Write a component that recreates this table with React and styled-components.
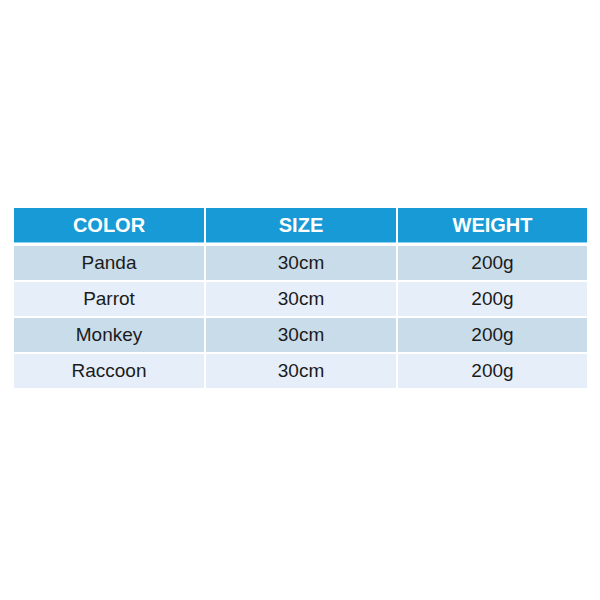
import React from 'react';
import styled, { createGlobalStyle } from 'styled-components';

const GlobalStyle = createGlobalStyle`
  body {
    margin: 0;
    background: #ffffff;
    font-family: "Liberation Sans", Arial, sans-serif;
  }
`;

const Page = styled.div`
  width: 600px;
  height: 600px;
  padding: 208px 0 0 14px;
  box-sizing: border-box;
`;

const Table = styled.div`
  width: 573px;
  display: grid;
  grid-template-columns: 190px 190px 189px;
  column-gap: 2px;
  row-gap: 2px;
`;

const HeadCell = styled.div`
  height: 34px;
  background: #189ad6;
  color: #ffffff;
  font-size: 20px;
  font-weight: bold;
  display: flex;
  align-items: center;
  justify-content: center;
  border-bottom: 1px solid #8fd0f0;
  margin-bottom: 1px;
`;

const Cell = styled.div`
  height: 34px;
  background: ${({ $odd }) => ($odd ? '#c9dcea' : '#e5eef9')};
  color: #1b1b1b;
  font-size: 19px;
  display: flex;
  align-items: center;
  justify-content: center;
`;

const rows = [
  ['Panda', '30cm', '200g'],
  ['Parrot', '30cm', '200g'],
  ['Monkey', '30cm', '200g'],
  ['Raccoon', '30cm', '200g'],
];

const App = () => {
  return (
    <>
      <GlobalStyle />
      <Page>
        <Table>
          <HeadCell>COLOR</HeadCell>
          <HeadCell>SIZE</HeadCell>
          <HeadCell>WEIGHT</HeadCell>
          {rows.map((row, i) =>
            row.map((val, j) => (
              <Cell key={i + '-' + j} $odd={i % 2 === 0}>{val}</Cell>
            ))
          )}
        </Table>
      </Page>
    </>
  );
};

export default App;
